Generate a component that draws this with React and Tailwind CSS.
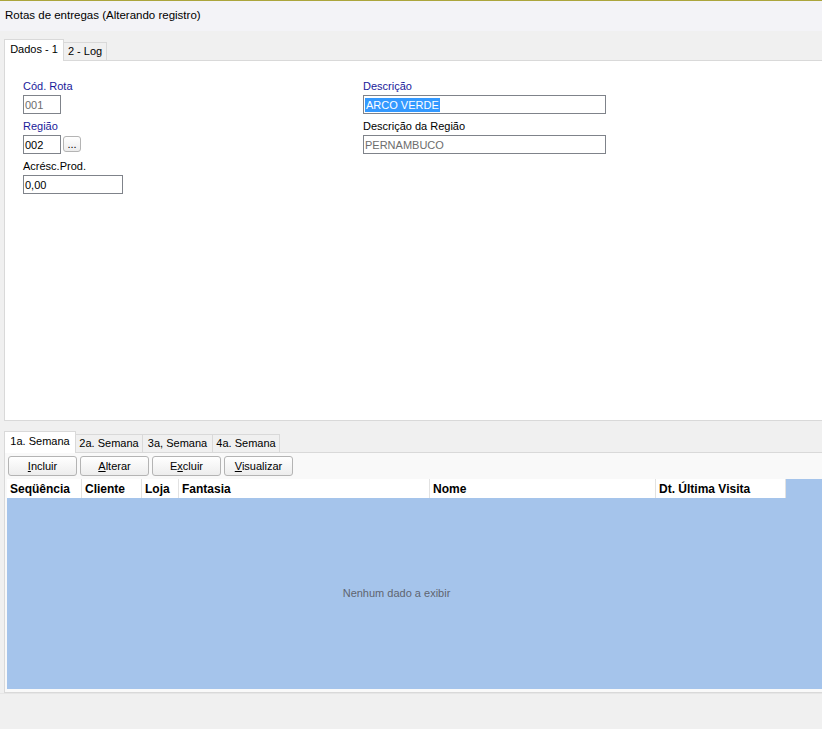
import React from "react";

function Field({ label, blue, children, className = "" }) {
  return (
    <div className={"flex flex-col " + className}>
      <div className={"h-[14px] leading-[14px] " + (blue ? "text-[#1a1a9a]" : "text-black")}>{label}</div>
      <div className="mt-[2px] flex items-start gap-[2px]">{children}</div>
    </div>
  );
}

function Input({ w, value, gray, selected }) {
  return (
    <div
      className={"h-[19px] border border-[#7f838a] bg-white flex items-center pl-[1px] leading-[14px] " + (gray ? "text-[#6d6d6d]" : "text-black")}
      style={{ width: w }}
    >
      {selected ? <span className="bg-[#3399ff] text-white px-[1px] leading-[14px]">{value}</span> : value}
    </div>
  );
}

function Btn({ children, w = "w-[69px]" }) {
  return (
    <div className={w + " h-[20px] rounded-[3px] border border-[#b4b4b4] bg-gradient-to-b from-[#ffffff] to-[#ededed] flex items-center justify-center text-black"}>
      {children}
    </div>
  );
}

export default function App() {
  const cols = [
    ["Seqüência", 75],
    ["Cliente", 60],
    ["Loja", 37],
    ["Fantasia", 251],
    ["Nome", 226],
    ["Dt. Última Visita", 130],
  ];
  return (
    <div className="w-[822px] h-[729px] bg-[#f0f0f0] flex flex-col overflow-hidden font-['Liberation_Sans',Arial,sans-serif] text-[11px] text-black">
      <div className="h-px bg-[#aba53c] shrink-0" />
      <div className="h-[30px] shrink-0 bg-[#f3f3f7] flex items-center pl-[5px] text-[11.5px]">
        Rotas de entregas (Alterando registro)
      </div>

      {/* top tabs */}
      <div className="mt-[8px] h-[21px] flex items-end pl-[4px] shrink-0">
        <div className="relative z-10 -mb-px h-[22px] w-[60px] bg-white border border-b-0 border-[#d9d9d9] flex items-center justify-center pb-[2px]">
          Dados - 1
        </div>
        <div className="h-[18px] w-[43px] bg-[#f0f0f0] border border-l-0 border-b-0 border-[#d9d9d9] flex items-center justify-center">
          2 - Log
        </div>
      </div>

      {/* main panel */}
      <div className="ml-[4px] h-[361px] shrink-0 border border-r-0 border-[#d9d9d9] bg-white flex pt-[18px] pl-[18px]">
        <div className="w-[340px] flex flex-col gap-[5px]">
          <Field label="Cód. Rota" blue>
            <Input w={38} value="001" gray />
          </Field>
          <Field label="Região" blue>
            <Input w={38} value="002" />
            <div className="mt-[1px] w-[18px] h-[16px] rounded-[3px] border border-[#b4b4b4] bg-gradient-to-b from-[#ffffff] to-[#ececec] flex items-end justify-center leading-[12px] pb-[1px]">
              ...
            </div>
          </Field>
          <Field label="Acrésc.Prod.">
            <Input w={100} value="0,00" />
          </Field>
        </div>
        <div className="flex flex-col gap-[5px]">
          <Field label="Descrição" blue>
            <Input w={243} value="ARCO VERDE" selected />
          </Field>
          <Field label="Descrição da Região">
            <Input w={243} value="PERNAMBUCO" gray />
          </Field>
        </div>
      </div>

      {/* lower tabs */}
      <div className="mt-[10px] h-[21px] flex items-end pl-[4px] shrink-0">
        <div className="relative z-10 -mb-px h-[22px] w-[72px] bg-white border border-b-0 border-[#d9d9d9] flex items-center justify-center pb-[2px]">
          1a. Semana
        </div>
        {[
          ["2a. Semana", 67],
          ["3a, Semana", 70],
          ["4a. Semana", 67],
        ].map(([t, w]) => (
          <div
            key={t}
            className="h-[18px] bg-[#f0f0f0] border border-l-0 border-b-0 border-[#d9d9d9] flex items-center justify-center"
            style={{ width: w }}
          >
            {t}
          </div>
        ))}
      </div>

      <div className="ml-[4px] h-[241px] shrink-0 border border-r-0 border-[#d9d9d9] bg-[#f9f9f9] flex flex-col">
        <div className="flex gap-[3px] pt-[3px] pl-[3px]">
          <Btn><span><u>I</u>ncluir</span></Btn>
          <Btn><span><u>A</u>lterar</span></Btn>
          <Btn><span>E<u>x</u>cluir</span></Btn>
          <Btn><span><u>V</u>isualizar</span></Btn>
        </div>
        <div className="mt-[3px] ml-[2px] h-[210px] bg-[#a5c4eb] flex flex-col">
          <div className="flex h-[19px] shrink-0">
            {cols.map(([t, w]) => (
              <div
                key={t}
                className="bg-white border-r border-[#e2e2e2] flex items-center pl-[3px] font-bold text-[12px] whitespace-nowrap overflow-hidden"
                style={{ width: w }}
              >
                {t}
              </div>
            ))}
          </div>
          <div className="flex-1 flex">
            <div className="w-[779px] flex items-center justify-center text-[#5f6470]">
              Nenhum dado a exibir
            </div>
          </div>
        </div>
      </div>
      <div className="h-px bg-[#e6e6e6] shrink-0" />
    </div>
  );
}
